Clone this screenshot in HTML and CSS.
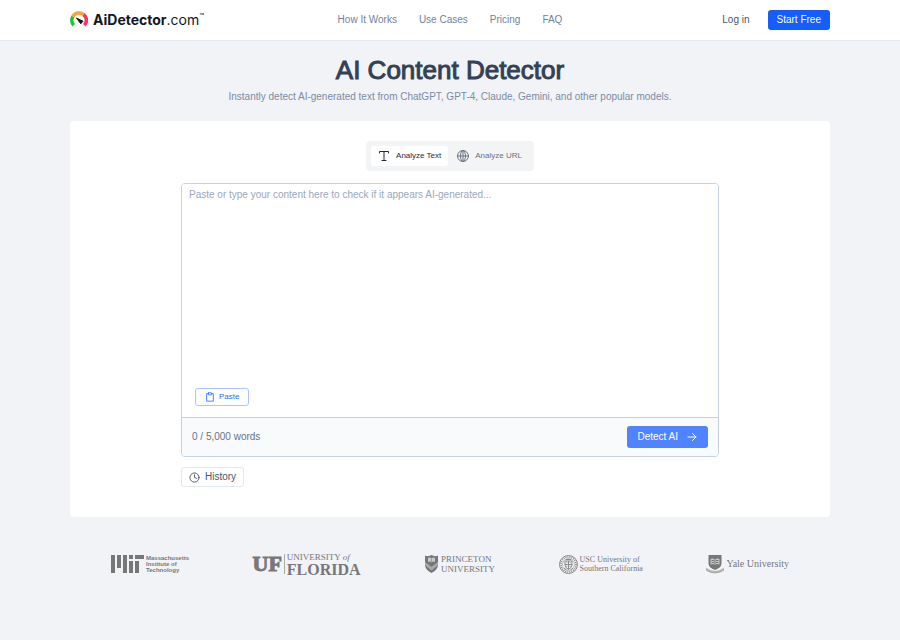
FILE: index.html
```html
<!DOCTYPE html>
<html lang="en">
<head>
    <meta charset="UTF-8">
    <meta name="viewport" content="width=device-width, initial-scale=1.0">
    <title>AI Content Detector</title>
    <link rel="stylesheet" href="styles.css">
</head>
<body>
    <header class="site-header">
        <div class="container header-inner">
            <a class="brand" href="#">
                <svg class="brand-icon" viewBox="0 0 36 36" fill="none" stroke-width="7">
                    <path d="M7.5 28.5A14 14 0 0 1 6 11" stroke="#19c832"/>
                    <path d="M6 11A14 14 0 0 1 27 7" stroke="#ffa033"/>
                    <path d="M27 7A14 14 0 0 1 28.5 28.5" stroke="#ff2e63"/>
                    <path d="M13 14L26 20.500L21.500 25.500Z" fill="#14161f" stroke="#14161f" stroke-width="2" stroke-linejoin="round"/>
                </svg>
                <span class="brand-name"><strong>AiDetector</strong>.com<sup>™</sup></span>
            </a>
            <nav class="main-nav">
                <a href="#">How It Works</a>
                <a href="#">Use Cases</a>
                <a href="#">Pricing</a>
                <a href="#">FAQ</a>
            </nav>
            <div class="account">
                <a class="login" href="#">Log in</a>
                <button class="start-btn" type="button">Start Free</button>
            </div>
        </div>
    </header>

    <main class="container">
        <section class="hero">
            <h1>AI Content Detector</h1>
            <p>Instantly detect AI-generated text from ChatGPT, GPT-4, Claude, Gemini, and other popular models.</p>
        </section>

        <section class="card">
            <div class="tabs">
                <button class="tab active" type="button">
                    <svg class="icon" viewBox="0 0 24 24"><path d="M3 6V3h18v3M12 3v18M8 21h8"/></svg>
                    Analyze Text
                </button>
                <button class="tab" type="button">
                    <svg class="icon" viewBox="0 0 24 24"><circle cx="12" cy="12" r="11"/><ellipse cx="12" cy="12" rx="5" ry="11"/><path d="M12 1v22M1 12h22"/></svg>
                    Analyze URL
                </button>
            </div>

            <div class="workspace">
                <form class="editor">
                    <textarea id="content" aria-label="Content to check" placeholder="Paste or type your content here to check if it appears AI-generated..."></textarea>
                    <div class="paste-row">
                        <button class="paste-btn" type="button">
                            <svg class="icon" viewBox="0 0 24 24"><path d="M8 4H4v18h16V4h-4"/><rect x="8" y="2" width="8" height="5" rx="1"/></svg>
                            Paste
                        </button>
                    </div>
                    <div class="editor-footer">
                        <span class="word-count">0 / 5,000 words</span>
                        <button class="detect-btn" type="submit">
                            Detect AI
                            <svg class="icon" viewBox="0 0 24 24"><path d="M4 12h16M13 5l7 7-7 7"/></svg>
                        </button>
                    </div>
                </form>
                <button class="history-btn" type="button">
                    <svg class="icon" viewBox="0 0 24 24"><circle cx="12" cy="12" r="10"/><path d="M12 6v6l5 2"/></svg>
                    History
                </button>
            </div>
        </section>

        <section class="schools">
            <div class="school mit">
                <svg class="mit-mark" viewBox="0 0 33 18" fill="#777">
                    <path d="M0 0h4v18H0zM6 0h4v13H6zM12 0h4v18h-4zM18 0h4v4h-4zM18 6h4v12h-4zM24 0h9v4h-9zM24 6h4v12h-4z"/>
                </svg>
                <span>Massachusetts<br>Institute of<br>Technology</span>
            </div>
            <div class="school florida">
                <strong>UF</strong>
                <span class="florida-name"><small>UNIVERSITY <i>of</i></small><b>FLORIDA</b></span>
            </div>
            <div class="school princeton">
                <svg class="shield" viewBox="0 0 30 38">
                    <path d="M2 2Q8 5 15 1Q22 5 28 2V22Q26 32 15 37Q4 32 2 22Z" fill="#777"/>
                    <path d="M2 15L15 25L28 15V21L15 32L2 21Z" fill="#aaa"/>
                    <path d="M8 7Q12 5 15 8Q18 5 22 7V15Q18 13 15 16Q12 13 8 15Z" fill="#c8c8ca"/>
                    <path d="M15 8v8" stroke="#777"/>
                </svg>
                <span>PRINCETON<br>UNIVERSITY</span>
            </div>
            <div class="school usc">
                <svg class="seal" viewBox="0 0 38 38" fill="none" stroke="#898989">
                    <circle cx="19" cy="19" r="18" stroke-width="2"/>
                    <circle cx="19" cy="19" r="15" stroke-width="3" stroke-dasharray="2 2"/>
                    <circle cx="19" cy="19" r="12"/>
                    <path d="M12 12h14v8q-1 6-7 9q-6-3-7-9zM12 19h14M19 12v16M10 26l5 4M28 26l-5 4M14 9h10" stroke-width="2"/>
                    <path d="M14 15h3M21 15h3M14 23h3M21 23h3"/>
                </svg>
                <span>USC University of<br>Southern California</span>
            </div>
            <div class="school yale">
                <svg class="crest" viewBox="0 0 36 38">
                    <path d="M5 1h26v17q-1 9-13 13Q6 27 5 18z" fill="#777"/>
                    <path d="M9 9q5-2 9 1q4-3 9-1v11q-5-2-9 1q-4-3-9-1z" fill="#c8c8ca"/>
                    <path d="M18 10v11M11 12h5M20 12h5M11 16h5M20 16h5" stroke="#777" stroke-width="2"/>
                    <path d="M1 28q17 12 34 0v4q-17 10-34 0z" fill="#bbb" stroke="#888"/>
                </svg>
                <span>Yale University</span>
            </div>
        </section>
    </main>
</body>
</html>
```
FILE: styles.css
```css
/* Reset some default browser styles */
* {
    margin: 0;
    padding: 0;
    box-sizing: border-box;
}

body {
    background-color: #f1f3f7;
    color: #334155;
    font-family: "Liberation Sans", Arial, sans-serif;
    font-size: 10px;
    line-height: 14px;
}

a {
    color: inherit;
    text-decoration: none;
}

button {
    display: flex;
    align-items: center;
    border: none;
    border-radius: 3px;
    background: none;
    color: inherit;
    font: inherit;
    cursor: pointer;
}

.container {
    width: 100%;
    max-width: 800px;
    margin: 0 auto;
    padding: 0 20px;
}

.icon {
    width: 12px;
    height: 12px;
    fill: none;
    stroke: currentColor;
    stroke-width: 2;
    stroke-linecap: round;
    stroke-linejoin: round;
}

/* Header */
.site-header {
    background-color: #fff;
    border-bottom: 1px solid #e2e8f0;
}

.header-inner {
    display: grid;
    grid-template-columns: 1fr auto 1fr;
    align-items: center;
    height: 40px;
}

.brand {
    display: flex;
    align-items: center;
    gap: 5px;
    color: #14161f;
}

.brand-icon {
    width: 18px;
    height: 18px;
}

.brand-name {
    font-family: Inter, sans-serif;
    font-size: 14px;
    line-height: 18px;
}

.brand-name sup {
    font-size: 8px;
    line-height: 1px;
    vertical-align: 6px;
}

.main-nav {
    display: flex;
    gap: 22px;
    color: #71829b;
}

.account {
    display: flex;
    align-items: center;
    justify-content: flex-end;
    gap: 18px;
}

.login {
    color: #475569;
}

.start-btn {
    height: 20px;
    padding: 0 9px;
    background-color: #155dfc;
    color: #fff;
}

/* Heading */
.hero {
    padding: 13px 0 17px;
    text-align: center;
}

.hero h1 {
    font-size: 26px;
    font-weight: normal;
    line-height: 32px;
    color: #334155;
    -webkit-text-stroke: 1px #334155;
}

.hero p {
    margin-top: 4px;
    color: #7b8ba3;
}

/* Detector card */
.card {
    display: flex;
    flex-direction: column;
    align-items: center;
    padding: 20px 20px 30px;
    background-color: #fff;
    border-radius: 4px;
}

.tabs {
    display: flex;
    gap: 2px;
    padding: 5px;
    background-color: #f3f4f6;
    border-radius: 4px;
}

.tab {
    gap: 6px;
    height: 20px;
    padding: 0 7px;
    color: #6b7280;
    font-size: 8px;
}

.tab.active {
    background-color: #fff;
    color: #1e293b;
}

.workspace {
    width: 100%;
    max-width: 538px;
    margin-top: 12px;
}

.editor {
    display: flex;
    flex-direction: column;
    border: 1px solid #c5d2e0;
    border-radius: 4px;
    overflow: hidden;
}

.editor textarea {
    height: 204px;
    padding: 4px 7px;
    border: none;
    outline: none;
    resize: none;
    color: #334155;
    font: inherit;
}

.editor textarea::placeholder {
    color: #9aa8bc;
}

.paste-row {
    padding: 0 13px 11px;
}

.paste-btn {
    gap: 4px;
    height: 18px;
    padding: 0 9px;
    border: 1px solid #a9c5ff;
    color: #2b6bfd;
    font-size: 8px;
}

.paste-btn .icon {
    width: 10px;
    height: 10px;
}

.editor-footer {
    display: flex;
    align-items: center;
    justify-content: space-between;
    height: 39px;
    padding: 0 10px;
    border-top: 1px solid #c5d2e0;
    background-color: #f8fafc;
}

.word-count {
    color: #64748b;
}

.detect-btn {
    gap: 8px;
    height: 22px;
    padding: 0 10px;
    background-color: #4f83ff;
    color: #fff;
}

.history-btn {
    gap: 5px;
    height: 20px;
    margin-top: 10px;
    padding: 0 7px;
    border: 1px solid #e2e8f0;
    color: #475569;
}

.history-btn .icon {
    width: 11px;
    height: 11px;
}

/* University logos */
.schools {
    display: flex;
    align-items: center;
    justify-content: space-between;
    max-width: 678px;
    margin: 36px auto 0;
    color: #777;
}

.school {
    display: flex;
    align-items: center;
    gap: 2px;
    height: 22px;
    font-family: "Liberation Serif", serif;
    white-space: nowrap;
}

.mit {
    font-family: "Liberation Sans", sans-serif;
    font-size: 6px;
    font-weight: bold;
    line-height: 6px;
}

.mit-mark {
    width: 33px;
    height: 18px;
}

.florida strong {
    padding-right: 2px;
    border-right: 1px solid #aaa;
    font-size: 22px;
    line-height: 20px;
    -webkit-text-stroke: 1px #777;
}

.florida-name {
    display: flex;
    flex-direction: column;
}

.florida small {
    font-size: 9px;
    line-height: 10px;
}

.florida b {
    font-size: 16px;
    line-height: 15px;
}

.princeton {
    font-size: 9px;
    line-height: 10px;
}

.shield {
    width: 15px;
    height: 20px;
}

.usc {
    font-size: 8px;
    line-height: 9px;
}

.seal {
    width: 19px;
    height: 19px;
}

.yale {
    font-size: 10px;
}

.crest {
    width: 18px;
    height: 20px;
}
```
